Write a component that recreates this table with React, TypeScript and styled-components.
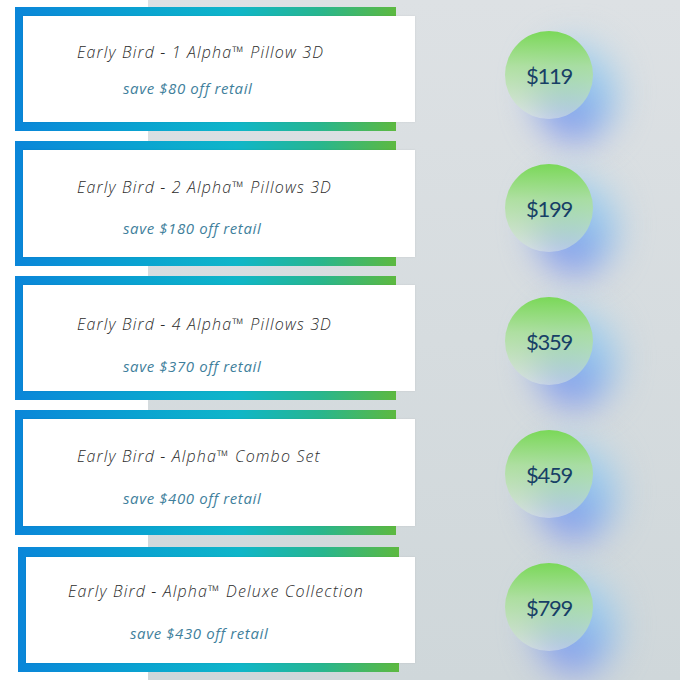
import React from 'react';
import styled, { createGlobalStyle } from 'styled-components';

const GlobalStyle = createGlobalStyle`
  html, body {
    margin: 0;
    padding: 0;
  }
  body {
    width: 680px;
    height: 680px;
    overflow: hidden;
    font-family: 'Open Sans', 'DejaVu Sans', sans-serif;
  }
`;

const Page = styled.main`
  display: grid;
  grid-template-columns: 440px 1fr;
  width: 680px;
  height: 680px;
  background:
    linear-gradient(to right, #fff 0 148px, transparent 148px),
    linear-gradient(to bottom, #dde1e4, #cfd7da);
`;

const CardColumn = styled.div`
  display: flex;
  flex-direction: column;
  padding-top: 7px;
`;

const Frame = styled.div<{ $gap: number; $left: number; $height: number; $inset: number }>`
  display: flex;
  width: 381px;
  height: ${(p) => p.$height}px;
  box-sizing: border-box;
  margin-top: ${(p) => p.$gap}px;
  margin-left: ${(p) => p.$left}px;
  padding: ${(p) => p.$inset}px 0 9px 8px;
  background: linear-gradient(90deg, #0a86d9 0%, #0aa5d0 35%, #0fb6c9 58%, #28b68e 80%, #5db940 100%);
`;

const Panel = styled.div<{ $width: number }>`
  flex: none;
  display: flex;
  flex-direction: column;
  width: ${(p) => p.$width}px;
  background: #fff;
  box-shadow: 0 0 2px rgba(0, 0, 0, 0.08);
`;

const Title = styled.div<{ $top: number; $left: number }>`
  margin: ${(p) => p.$top}px 0 0 ${(p) => p.$left}px;
  font-size: 16px;
  line-height: 20px;
  font-style: italic;
  font-weight: 300;
  letter-spacing: 1.15px;
  color: #2c2c2c;
  white-space: nowrap;
`;

const Saving = styled.div<{ $gap: number; $left: number }>`
  margin: ${(p) => p.$gap}px 0 0 ${(p) => p.$left}px;
  font-size: 15px;
  line-height: 20px;
  font-style: italic;
  font-weight: 400;
  letter-spacing: 0.6px;
  color: #3f7f9c;
  white-space: nowrap;
`;

const PriceColumn = styled.div`
  display: flex;
  flex-direction: column;
  align-items: flex-start;
  gap: 45px;
  padding: 31px 0 0 65px;
`;

const PriceBubble = styled.div`
  position: relative;
  width: 88px;
  height: 88px;
`;

// soft blue-violet haze sitting under the price disc
const Glow = styled.div`
  position: absolute;
  left: 30px;
  top: 10px;
  width: 82px;
  height: 100px;
  border-radius: 50%;
  background: linear-gradient(210deg, rgba(184, 222, 238, 0.7) 5%, #8fc2ec 45%, #7c86ec 92%);
  filter: blur(17px);
`;

const Disc = styled.div`
  position: relative;
  display: flex;
  align-items: center;
  justify-content: center;
  width: 88px;
  height: 88px;
  border-radius: 50%;
  background: linear-gradient(to bottom, rgba(122, 216, 88, 1) 0%, rgba(168, 224, 150, 0.85) 40%, rgba(228, 236, 230, 0.45) 100%);
  font-family: 'Lato', 'Open Sans', sans-serif;
  font-size: 22px;
  color: #173f66;
  letter-spacing: -1.2px;
`;

type Offer = {
  title: string;
  saving: string;
  price: string;
  gap: number;
  left: number;
  height: number;
  inset: number;
  panel: number;
  titleTop: number;
  titleLeft: number;
  savingGap: number;
  savingLeft: number;
};

const offers: Offer[] = [
  { title: 'Early Bird - 1 Alpha™ Pillow 3D', saving: 'save $80 off retail', price: '$119', gap: 0, left: 15, height: 124, inset: 9, panel: 392, titleTop: 26, titleLeft: 54, savingGap: 16, savingLeft: 100 },
  { title: 'Early Bird - 2 Alpha™ Pillows 3D', saving: 'save $180 off retail', price: '$199', gap: 10, left: 15, height: 125, inset: 9, panel: 392, titleTop: 27, titleLeft: 54, savingGap: 21, savingLeft: 100 },
  { title: 'Early Bird - 4 Alpha™ Pillows 3D', saving: 'save $370 off retail', price: '$359', gap: 10, left: 15, height: 124, inset: 9, panel: 392, titleTop: 29, titleLeft: 54, savingGap: 22, savingLeft: 100 },
  { title: 'Early Bird - Alpha™ Combo Set', saving: 'save $400 off retail', price: '$459', gap: 10, left: 15, height: 125, inset: 9, panel: 392, titleTop: 27, titleLeft: 54, savingGap: 22, savingLeft: 100 },
  { title: 'Early Bird - Alpha™ Deluxe Collection', saving: 'save $430 off retail', price: '$799', gap: 12, left: 18, height: 125, inset: 10, panel: 389, titleTop: 24, titleLeft: 42, savingGap: 22, savingLeft: 104 },
];

export default function App() {
  return (
    <>
      <GlobalStyle />
      <Page>
        <CardColumn>
          {offers.map((o) => (
            <Frame key={o.title} $gap={o.gap} $left={o.left} $height={o.height} $inset={o.inset}>
              <Panel $width={o.panel}>
                <Title $top={o.titleTop} $left={o.titleLeft}>{o.title}</Title>
                <Saving $gap={o.savingGap} $left={o.savingLeft}>{o.saving}</Saving>
              </Panel>
            </Frame>
          ))}
        </CardColumn>
        <PriceColumn>
          {offers.map((o) => (
            <PriceBubble key={o.price}>
              <Glow />
              <Disc>{o.price}</Disc>
            </PriceBubble>
          ))}
        </PriceColumn>
      </Page>
    </>
  );
}
